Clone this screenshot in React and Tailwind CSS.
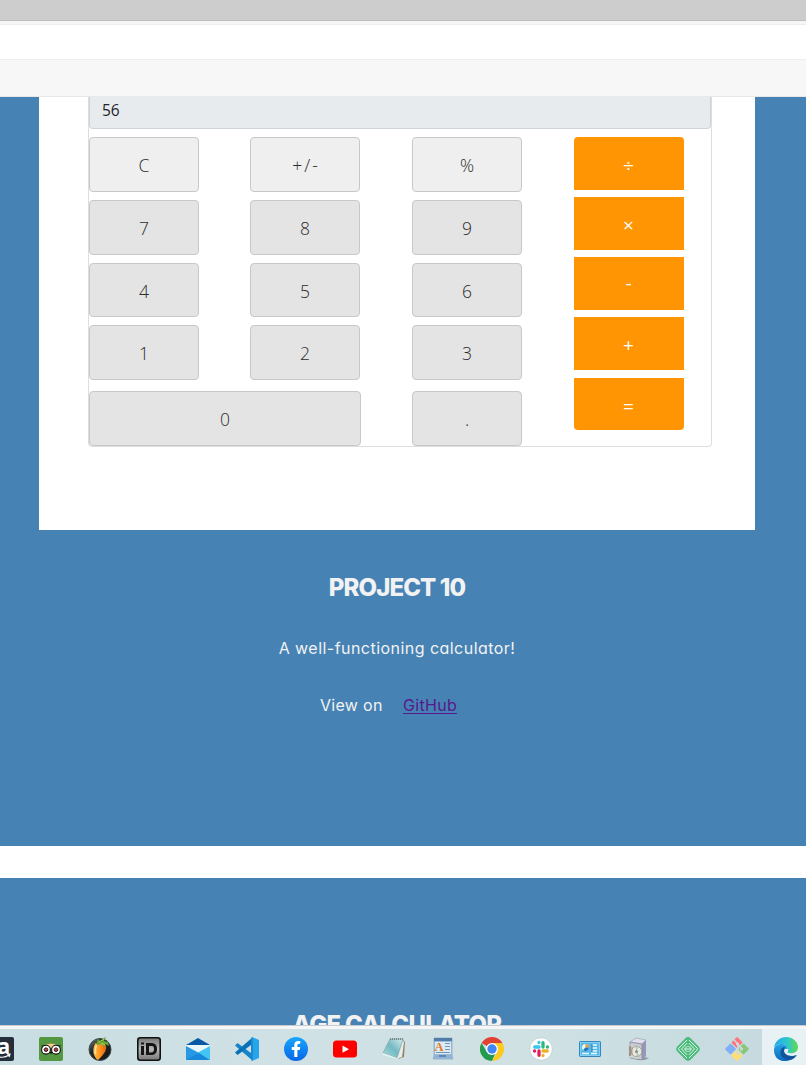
import React from "react";
import { FaFacebookF } from "react-icons/fa";

const KEY =
  "flex w-[110px] items-center justify-center rounded-[4px] border border-[#c8c8c8] pt-[2px] font-['Open_Sans','Noto_Sans',sans-serif] text-[17.5px] font-[350] text-[#2b2b2b]";
const OP =
  "flex w-[110px] items-center justify-center bg-[#ff9502] pr-px font-['Open_Sans','Noto_Sans',sans-serif] text-[19px] leading-none text-white";

function Column({ labels, className }) {
  return (
    <div className={"flex flex-col " + className}>
      <button className={KEY + " h-[55px] bg-[#efefef]"}>
        {labels[0] === "+/-" ? <span className="pl-0.5 tracking-[2px]">+/-</span> : labels[0]}
      </button>
      <button className={KEY + " mt-2 h-[55px] bg-[#e4e4e4]"}>{labels[1]}</button>
      <button className={KEY + " mt-2 h-[54px] bg-[#e4e4e4]"}>{labels[2]}</button>
      <button className={KEY + " mt-2 h-[55px] bg-[#e4e4e4]"}>{labels[3]}</button>
    </div>
  );
}

function Calculator() {
  return (
    <div className="ml-[49px] h-[350px] w-[624px] rounded-b-[4px] border border-t-0 border-[#dedede]">
      <div className="flex h-8 items-center rounded-b-[4px] border border-t-0 border-[#ced4da] bg-[#e7ebee] pb-[3px] pl-3 font-['Open_Sans','Noto_Sans',sans-serif] text-[15.5px] text-[#212529]">
        56
      </div>
      <div className="mt-2 flex">
        <div>
          <div className="flex">
            <Column labels={["C", "7", "4", "1"]} className="" />
            <Column labels={["+/-", "8", "5", "2"]} className="ml-[51px]" />
            <Column labels={["%", "9", "6", "3"]} className="ml-[52px]" />
          </div>
          <div className="mt-[11px] flex">
            <button className={KEY + " h-[55px] w-[272px]! bg-[#e4e4e4]"}>0</button>
            <button className={KEY + " ml-[51px] h-[55px] bg-[#e4e4e4]"}>.</button>
          </div>
        </div>
        <div className="ml-[52px] flex flex-col">
          <button className={OP + " h-[53px] rounded-t-[4px] pt-[3px]"}>÷</button>
          <button className={OP + " mt-[7px] h-[53px] pt-[3px]"}>×</button>
          <button className={OP + " mt-[7px] h-[53px]"}>-</button>
          <button className={OP + " mt-[7px] h-[53px] pt-[3px]"}>+</button>
          <button className={OP + " mt-2 h-[52px] rounded-b-[4px] pt-1"}>=</button>
        </div>
      </div>
    </div>
  );
}

function Icon({ children }) {
  return (
    <svg viewBox="0 0 24 24" className="block h-6 w-6 shrink-0">
      {children}
    </svg>
  );
}

function Taskbar() {
  return (
    <footer className="flex h-9 overflow-hidden bg-[linear-gradient(90deg,#c8dee2,#d0e1e5_35%,#cfe1e3_65%,#c4d9df)]">
      <div className="-ml-[10px] flex w-[772px] shrink-0 items-center gap-[25px] pb-0 pt-1">
        <Icon>
          <rect width="24" height="24" rx="2" fill="#252f3b" />
          <text x="7.500" y="17" fontFamily="Open Sans" fontWeight="700" fontSize="21" fill="#fff">a</text>
          <path d="M4 18c6 3 11 3 15 0m-2-1h3l-1 3" stroke="#fff" strokeWidth="1.2" fill="none" />
        </Icon>
        <Icon>
          <rect width="24" height="24" rx="2" fill="#539841" />
          <path d="M2 8.500h4Q12 3.500 18 8.500h4l-2.500 3h-15z" fill="#111" />
          <path d="M6 8q6-3.500 12 0l-4 3.500h-4z" fill="#edcf8c" />
          <circle cx="7" cy="12.700" r="4.400" fill="#fff" stroke="#111" strokeWidth="1.100" />
          <circle cx="17" cy="12.700" r="4.400" fill="#fff" stroke="#111" strokeWidth="1.100" />
          <circle cx="7" cy="12.700" r="1.800" fill="#d92f36" stroke="#222" strokeWidth="1" />
          <circle cx="17" cy="12.700" r="1.800" fill="#d92f36" stroke="#222" strokeWidth="1" />
          <path d="m10.500 15 1.500 2.500 1.500-2.500z" fill="#111" />
        </Icon>
        <Icon>
          <defs>
            <linearGradient id="fruit" x1="0" x2="1">
              <stop stopColor="#ffbd48" /><stop offset=".5" stopColor="#ff961e" /><stop offset="1" stopColor="#e8620c" />
            </linearGradient>
            <linearGradient id="disc" x1="0" x2="1" y2="1">
              <stop stopColor="#7d8583" /><stop offset=".35" stopColor="#20282a" /><stop offset="1" stopColor="#111719" />
            </linearGradient>
          </defs>
          <circle cx="12" cy="12.500" r="11" fill="url(#disc)" stroke="#40494a" />
          <path d="M7 7c2-3 10-2 11 2 1 5-3 9-8 14C5 20 4 12 7 7Z" fill="url(#fruit)" />
          <path d="M8.500 8c-1.500 3-1.500 6-1 9" stroke="#ffe2a0" strokeWidth="1.600" fill="none" />
          <path d="M12 6 6 3l3 1 1-2 3 3 3-4 2-1-2 4 4 1 1 4-4-2-1 4-2-4-4 1-4-2z" fill="#64a836" />
          <path d="m11 5 5-3m-3 4 4 2" stroke="#b7d958" />
        </Icon>
        <Icon>
          <defs><linearGradient id="steel" y2="1" x2="0"><stop stopColor="#777" /><stop offset=".5" stopColor="#b9b9b9" /><stop offset="1" stopColor="#777" /></linearGradient></defs>
          <rect x=".8" y=".8" width="22.400" height="22.400" rx="2.500" fill="url(#steel)" stroke="#111" strokeWidth="1.600" />
          <path fillRule="evenodd" d="M4 9h3v9H4zM4 5.500h3v2H4zM9 6h5c4 0 6 2 6 6s-2 6-6 6H9zm3 3v6.500h2c2 0 3-1 3-3.500s-1-3-3-3z" fill="#161616" />
        </Icon>
        <Icon>
          <path d="M0 8 12 1l12 7v3L12 17 0 11z" fill="#0758a5" />
          <path d="M0 8h24v3l-12 7L0 11z" fill="#e9f7fd" />
          <path d="m0 9 17 9-6 5H0z" fill="#2898e2" />
          <path d="m24 9-13 7 13 7z" fill="#42c5f3" />
          <path d="m0 23 13-7 11 7z" fill="#1788da" />
        </Icon>
        <Icon>
          <path d="M0 8.500 2.500 6 18 17.500V24L0 8.500Z" fill="#1684c7" />
          <path d="M0 15.500 18 0v6.500L2.500 18 0 15.500Z" fill="#0872b8" />
          <path d="m17 0 7 3v18l-7 3-1-1V1z" fill="#27a5ea" />
          <path d="m16 1 2 1v20l-2 1z" fill="#188bd2" />
        </Icon>
        <Icon>
          <defs><linearGradient id="fb" y2="1" x2="0"><stop stopColor="#19a7fc" /><stop offset="1" stopColor="#0765e6" /></linearGradient></defs>
          <circle cx="12" cy="12" r="12" fill="url(#fb)" />
          <FaFacebookF x="4" y="4" size="16" color="white" />
        </Icon>
        <Icon>
          <rect y="3.500" width="24" height="17" rx="3.500" fill="#f00" />
          <path d="m9.500 8.500 6.500 3.700-6.500 3.500z" fill="#fff" />
        </Icon>
        <Icon>
          <defs><linearGradient id="note" x1="1" x2="0" y2="1"><stop stopColor="#d4ecee" /><stop offset=".5" stopColor="#73b9c2" /><stop offset="1" stopColor="#a8e0df" /></linearGradient></defs>
          <path d="m20 2 3 3-1 15-6 2z" fill="#8f8867" />
          <path d="m20 3 2 2-2 15-6 2z" fill="#e9eceb" />
          <path d="M8 2h13l-6 19-14-5z" fill="url(#note)" stroke="#7ca4aa" strokeWidth=".7" />
          <path d="m1 16 14 5 2-1-1 2L1 18z" fill="#e2f7f5" />
          <path d="M8 2h13" stroke="#687477" strokeWidth="1.500" strokeDasharray="1 1" />
        </Icon>
        <Icon>
          <path d="M3 1h18v19l1 2H2l1-2z" fill="#9dbbd7" stroke="#8eabc8" strokeWidth=".8" />
          <path d="M3 1h18v3H3z" fill="#527da9" />
          <path d="M4 5h16v12H4z" fill="#dceaf5" />
          <path d="M14 6.500h5m-5 3h5m-5 3h5M5 15.500h14" stroke="#7295b4" />
          <path d="M3 18h18l1 3H2z" fill="#8fb2d6" />
          <path d="M8 19h7" stroke="#4d78aa" strokeWidth="1.500" />
          <text x="3.500" y="14" fontSize="12.500" fontWeight="700" fontFamily="Liberation Serif" fill="#e47820">A</text>
        </Icon>
        <Icon>
          <path d="M12 12 1.600 6A12 12 0 0 1 22.400 6z" fill="#e34133" />
          <path d="M12 12h5.200L12 24A12 12 0 0 1 1.600 6L6.800 15z" fill="#229b4c" />
          <path d="M12 6h10.400A12 12 0 0 1 12 24l5.200-9z" fill="#fdca20" />
          <circle cx="12" cy="12" r="6" fill="#fff" />
          <circle cx="12" cy="12" r="4.700" fill="#4285f4" />
        </Icon>
        <Icon>
          <circle cx="12" cy="12" r="11.300" fill="#fff" stroke="#bac8ca" strokeWidth=".7" />
          <g strokeWidth="3.300" strokeLinecap="round" fill="none">
            <path d="M5.700 10H10M10 5.500v.1" stroke="#36c5f0" />
            <path d="M14 5.700V10M18.500 10h-.1" stroke="#2eb67d" />
            <path d="M18.300 14H14M14 18.500v-.1" stroke="#ecb22e" />
            <path d="M10 18.300V14M5.500 14h.1" stroke="#e01e5a" />
          </g>
        </Icon>
        <Icon>
          <rect x="1.500" y="4.500" width="21" height="15" rx=".7" fill="#55b8e9" stroke="#3485b9" />
          <rect x="2.500" y="5.500" width="19" height="13" fill="none" stroke="#95dcf8" strokeWidth=".7" />
          <circle cx="7.500" cy="10.500" r="3.600" fill="#e5f6fb" />
          <path d="M7.500 10.500V7a3.500 3.500 0 0 1 3.500 3.500z" fill="#f19a23" />
          <path d="M7.500 10.500H11a3.500 3.500 0 0 1-6 2.500z" fill="#1e79bc" />
          <path d="M14 8h5m-5 3h5m-5 3h5M4 16.500h7m2 0h6" stroke="#e8faff" strokeWidth="1.300" />
          <path d="M14 7v8" stroke="#2875aa" />
        </Icon>
        <Icon>
          <path d="m17 20 5 1-4 2H8z" fill="#8b9b9e" />
          <path d="m3 5 6-4 10 2-4 4z" fill="#dfdfed" stroke="#9898ae" strokeWidth=".6" />
          <path d="m15 7 4-4v16l-4 4z" fill="#9a96ba" />
          <path d="M3 5l12 2v16L3 21z" fill="#c8cacf" stroke="#858593" strokeWidth=".7" />
          <path d="m1 8 10 2v12L1 20z" fill="#d3d5d1" />
          <circle cx="9.500" cy="14.500" r="5.200" fill="#e5e9df" stroke="#9ca6a3" />
          <path d="m9.500 14.500-1-5a5 5 0 0 1 3 0zm0 0 3 4-3 1z" fill="#b6c4b1" />
          <circle cx="9.500" cy="14.500" r="1.500" fill="#858e8d" />
          <path d="M3 9v10" stroke="#686c6d" strokeWidth="1.200" />
          <path d="M5 10v8" stroke="#c56655" strokeWidth=".7" />
        </Icon>
        <Icon>
          <rect x="2.600" y="2.600" width="18.800" height="18.800" rx="4" transform="rotate(45 12 12)" fill="#4dbb7d" />
          <g fill="none" stroke="#e3f6e8" strokeWidth="1">
            <path d="M11 3 2.800 11.200q-.8.800 0 1.600L11 21M13 3l8.200 8.200q.8.800 0 1.600L13 21" />
            <path d="M11 6.200 5.500 12l5.500 5.800M13 6.200l5.500 5.800-5.500 5.800" />
            <path d="M11 9.300 8.500 12l2.500 2.700M13 9.300l2.500 2.700-2.500 2.700M9 12h6M12 9v1m0 4v1" />
          </g>
        </Icon>
        <Icon>
          <rect x="8" y="1.500" width="8" height="8" rx="1" transform="rotate(45 12 5.500)" fill="#ff7478" />
          <rect x="1.500" y="8" width="8" height="8" rx="1" transform="rotate(45 5.500 12)" fill="#80aef9" />
          <rect x="14.500" y="8" width="8" height="8" rx="1" transform="rotate(45 18.500 12)" fill="#8bc778" />
          <rect x="8" y="14.500" width="8" height="8" rx="1" transform="rotate(45 12 18.500)" fill="#ffdf72" />
          <path d="m8 2 5 5v9m0-9 4 5" stroke="#cadce1" strokeWidth="1.500" fill="none" />
          <circle cx="12.500" cy="7" r="1.600" fill="#cadce1" /><circle cx="16.500" cy="12" r="1.600" fill="#cadce1" /><circle cx="13" cy="16.500" r="1.600" fill="#cadce1" />
        </Icon>
      </div>
      <div className="flex w-11 shrink-0 items-center bg-[#e8f2f5] pl-3 pt-1">
        <Icon>
          <defs>
            <linearGradient id="edgeTop"><stop stopColor="#24a9ed" /><stop offset=".55" stopColor="#2dc7cb" /><stop offset="1" stopColor="#61d94e" /></linearGradient>
            <linearGradient id="edgeLeft" y2="1" x2="0"><stop stopColor="#27a4e4" /><stop offset="1" stopColor="#0b68bd" /></linearGradient>
          </defs>
          <path d="M0 12C2 6 13 5 14 12c-2-1-5 0-4 4 1 5 7 5 12 2-5 8-18 8-21 0-1-2-1-4-1-6Z" fill="url(#edgeLeft)" />
          <path d="M0 11C1 4 6 0 12 0c7 0 12 5 12 10 0 5-4 7-9 6-2 0-2-1-1-2C16 9 6 3 0 11Z" fill="url(#edgeTop)" />
          <path d="M8 11c-4 5 0 12 7 12 3 0 6-2 8-5-5 2-13 1-13-5 0-1 0-2 1-3-1 0-2 0-3 1Z" fill="#10549e" />
        </Icon>
      </div>
    </footer>
  );
}

export default function App() {
  return (
    <div className="flex h-[1065px] w-[806px] flex-col overflow-hidden bg-white font-['Inter',sans-serif] [font-feature-settings:'cv11']">
      <header className="shrink-0">
        <div className="h-[21px] border-b border-[#bdbdbd] bg-[#cdcdcd]" />
        <div className="h-1 border-b border-[#eeeeee] bg-[#f6f6f6]" />
        <div className="h-[34px] bg-white" />
        <div className="h-[38px] border-b border-t border-b-[#e8e8e8] border-t-[#eeeeee] bg-[#f7f7f7]" />
      </header>
      <main className="h-[928px] shrink-0 overflow-hidden">
        <section className="h-[749px] bg-[#4682b4] text-[#f2f2f2]">
          <div className="ml-[39px] h-[433px] w-[716px] bg-white">
            <Calculator />
          </div>
          <div className="flex w-[794px] flex-col items-center">
            <h2 className="mt-10 whitespace-nowrap text-[24px] font-extrabold leading-9 tracking-[-0.9px]">PROJECT 10</h2>
            <p className="mt-[30px] whitespace-nowrap text-[16px] leading-6 tracking-[0.46px]">A well-functioning calculator!</p>
            <p className="mt-[33px] flex w-[154px] justify-between whitespace-nowrap pr-[17px] text-[16px] leading-6 tracking-[0.3px]">
              <span>View on</span>
              <a className="text-[#551a8b] underline underline-offset-2">GitHub</a>
            </p>
          </div>
        </section>
        <section className="mt-8 flex h-[400px] flex-col bg-[#4682b4] text-[#f2f2f2]">
          <h2 className="mt-[129px] w-[794px] whitespace-nowrap text-center text-[24px] font-extrabold leading-9 tracking-[-0.7px]">AGE CALCULATOR</h2>
        </section>
      </main>
      <div className="h-1 shrink-0 border-t border-[#c9cbce] bg-[#f4f6f8]" />
      <Taskbar />
    </div>
  );
}
